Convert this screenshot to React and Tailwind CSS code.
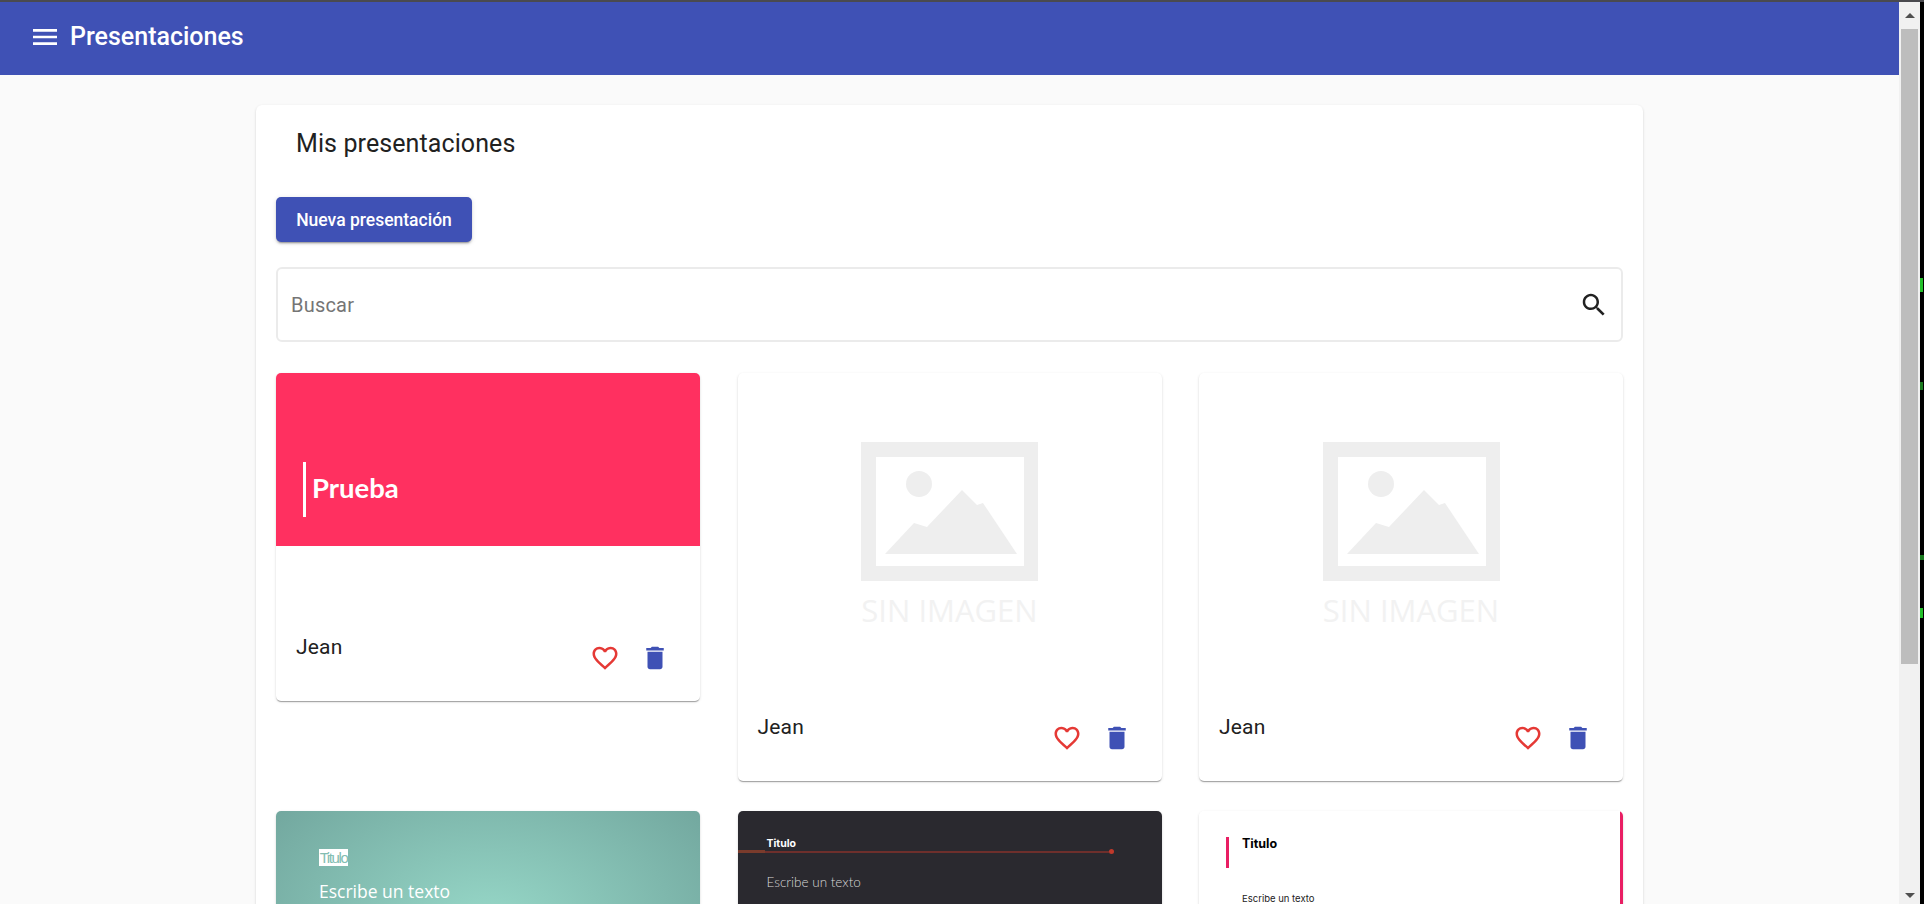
const ICONS = {
  menu: "M3 18h18v-2H3v2zm0-5h18v-2H3v2zm0-7v2h18V6H3z",
  search: "M15.5 14h-.79l-.28-.27C15.41 12.59 16 11.11 16 9.5 16 5.91 13.09 3 9.5 3S3 5.91 3 9.5 5.91 16 9.5 16c1.61 0 3.09-.59 4.23-1.57l.27.28v.79l5 4.99L20.49 19l-4.99-5zm-6 0C7.01 14 5 11.99 5 9.5S7.01 5 9.5 5 14 7.01 14 9.5 11.99 14 9.5 14z",
  heart: "M16.5 3c-1.74 0-3.41.81-4.5 2.09C10.91 3.81 9.24 3 7.5 3 4.42 3 2 5.42 2 8.5c0 3.78 3.4 6.86 8.55 11.54L12 21.35l1.45-1.32C18.6 15.36 22 12.28 22 8.5 22 5.42 19.58 3 16.5 3zm-4.4 15.55l-.1.1-.1-.1C7.14 14.24 4 11.39 4 8.5 4 6.5 5.5 5 7.5 5c1.54 0 3.04.99 3.57 2.36h1.87C13.46 5.99 14.96 5 16.5 5c2 0 3.5 1.5 3.5 3.5 0 2.89-3.14 5.74-7.9 10.05z",
  trash: "M6 19c0 1.1.9 2 2 2h8c1.1 0 2-.9 2-2V7H6v12zM19 4h-3.5l-1-1h-5l-1 1H5v2h14V4z",
};

function Icon({ name, className }) {
  return (
    <svg viewBox="0 0 24 24" fill="currentColor" className={className}>
      <path d={ICONS[name]} />
    </svg>
  );
}

function CardFooter() {
  return (
    <div className="flex h-[155px] items-start justify-between pl-5 pr-[20px]">
      <span className="mt-[87px] text-[21px] leading-[28px] tracking-[0.2px] text-[#212121]">Jean</span>
      <div className="mt-[87px] flex">
        <button className="flex h-[50px] w-[50px] items-center justify-center text-[#e53935]">
          <Icon name="heart" className="h-[30px] w-[30px]" />
        </button>
        <button className="flex h-[50px] w-[50px] items-center justify-center text-[#3f51b5]">
          <Icon name="trash" className="h-[30px] w-[30px]" />
        </button>
      </div>
    </div>
  );
}

function NoImage() {
  return (
    <div className="flex h-[253px] flex-col items-center pt-[69px]">
      <svg viewBox="0 0 177 139" className="h-[139px] w-[177px] shrink-0">
        <path
          fill="#eeeeee"
          fillRule="evenodd"
          d="M0 0H177V139H0ZM15 15V124H163V15Z"
        />
        <circle cx="58" cy="42" r="13" fill="#eeeeee" />
        <path
          fill="#eeeeee"
          d="M24 112 L53 81 L66 85 L101 48 L116 63 L122 61 L156 112Z"
        />
      </svg>
      <span className="mt-[14px] font-['Open_Sans'] text-[31px] leading-[30px] text-[#f2f2f2]">SIN IMAGEN</span>
    </div>
  );
}

function Card({ children }) {
  return (
    <div className="overflow-hidden rounded-[5px] bg-white shadow-[0_2px_1px_-1px_rgba(0,0,0,0.2),0_1px_1px_0_rgba(0,0,0,0.14),0_1px_3px_0_rgba(0,0,0,0.12)]">
      {children}
    </div>
  );
}

export default function App() {
  return (
    <div className="flex h-[904px] flex-col overflow-hidden bg-black font-['Roboto',sans-serif]">
      <div className="h-[2px] shrink-0 bg-[#4a4a4f]"></div>
      <div className="flex min-h-0 flex-1">
        {/* page */}
        <div className="h-full w-[1899px] shrink-0 overflow-hidden bg-[#fafafa]">
          <header className="flex h-[73px] items-center bg-[#3f51b5] pb-[4px] pl-[29px] text-white">
            <Icon name="menu" className="h-8 w-8" />
            <h1 className="ml-[9px] text-[25px] font-medium leading-[28px]">Presentaciones</h1>
          </header>

          <main className="mx-[256px] mt-[30px] rounded-[6px] bg-white px-5 shadow-[0_2px_1px_-1px_rgba(0,0,0,0.2),0_1px_1px_0_rgba(0,0,0,0.14),0_1px_3px_0_rgba(0,0,0,0.12)]">
            <h2 className="pl-5 pt-[23px] text-[25px] leading-[32px] tracking-[0.1px] text-[#212121]">Mis presentaciones</h2>

            <button className="mt-[37px] flex h-[45px] w-[196px] items-center justify-center rounded-[5px] bg-[#3f51b5] pt-[1px] text-[17.5px] font-medium text-white shadow-[0_3px_1px_-2px_rgba(0,0,0,0.2),0_2px_2px_0_rgba(0,0,0,0.14),0_1px_5px_0_rgba(0,0,0,0.12)]">
              Nueva presentación
            </button>

            <div className="mt-[25px] flex h-[75px] items-center rounded-[6px] border-2 border-[#ebebeb] pl-[13px] pr-[12px]">
              <input
                placeholder="Buscar"
                className="min-w-0 flex-1 bg-transparent text-[20px] tracking-[0.2px] outline-none placeholder:text-[#757575]"
              />
              <Icon name="search" className="h-[30px] w-[30px] text-[#212121]" />
            </div>

            <div className="mt-[31px] grid grid-cols-[424px_424px_424px] items-start justify-between gap-y-[30px]">
              <Card>
                <div className="flex h-[173px] items-center bg-[#ff3060] pl-[27px] pt-[60px]">
                  <div className="h-[55px] w-[3px] bg-white"></div>
                  <span className="mb-[3px] ml-[6px] font-['Lato'] text-[27.5px] font-bold leading-[34px] text-white">Prueba</span>
                </div>
                <CardFooter />
              </Card>
              <Card>
                <NoImage />
                <CardFooter />
              </Card>
              <Card>
                <NoImage />
                <CardFooter />
              </Card>

              <Card>
                <div className="h-[253px] bg-[radial-gradient(ellipse_at_50%_45%,#97d8c8_0%,#6fa39b_100%)] pl-[43px] pt-[38px]">
                  <span className="block w-[29px] overflow-hidden bg-white text-center font-['Liberation_Sans'] text-[15px] leading-[17px] tracking-[-1.4px] text-[#83bdb1]">Titulo</span>
                  <p className="mt-[15px] font-['Open_Sans'] text-[17.5px] leading-[20px] text-white">Escribe un texto</p>
                </div>
              </Card>
              <Card>
                <div className="h-[253px] bg-[#2a292f]">
                  <p className="pl-[29px] pt-[25px] font-['Inter'] text-[10.5px] font-bold leading-[16px] text-white">Titulo</p>
                  <div className="mt-[-3px] flex items-center">
                    <div className="h-[3px] w-[27px] bg-[#7a3b2c]"></div>
                    <div className="h-[2px] w-[344px] bg-[#6e2f2c]"></div>
                    <div className="h-[5px] w-[5px] rounded-full bg-[#c0392b]"></div>
                  </div>
                  <p className="mt-[16px] pl-[29px] font-['Lato'] text-[13.5px] font-light leading-[24px] text-[#d8d8d8]">Escribe un texto</p>
                </div>
              </Card>
              <Card>
                <div className="flex h-[253px] justify-between bg-white pl-[27px]">
                  <div className="pt-[26px]">
                    <div className="flex">
                      <div className="h-[31px] w-[3px] bg-[#e91e63]"></div>
                      <p className="ml-[13px] font-['Inter'] text-[12.5px] font-bold leading-[14px] text-black">Titulo</p>
                    </div>
                    <p className="ml-[16px] mt-[26px] font-['Inter'] text-[9.5px] leading-[10px] text-[#222222]">Escribe un texto</p>
                  </div>
                  <div className="h-full w-[3px] bg-[#e91e63]"></div>
                </div>
              </Card>
            </div>
          </main>
        </div>

        {/* scrollbar */}
        <div className="flex w-[21px] shrink-0 flex-col bg-[#f1f1f1]">
          <div className="flex h-[27px] shrink-0 items-center justify-center">
            <div className="h-0 w-0 border-x-[5px] border-b-[5px] border-x-transparent border-b-[#505050]"></div>
          </div>
          <div className="ml-[2px] h-[635px] w-[17px] shrink-0 bg-[#bdbdbd]"></div>
          <div className="flex-1"></div>
          <div className="flex h-[17px] shrink-0 items-center justify-center">
            <div className="h-0 w-0 border-x-[5px] border-t-[5px] border-x-transparent border-t-[#505050]"></div>
          </div>
        </div>

        {/* terminal edge behind the window */}
        <div className="relative flex-1 bg-black">
          <div className="absolute left-0 top-[276px] h-[14px] w-[3px] bg-[#22c02a]"></div>
          <div className="absolute left-0 top-[380px] h-[8px] w-[3px] bg-[#1a7a1f]"></div>
          <div className="absolute left-0 top-[553px] h-[5px] w-[4px] bg-[#1a7a1f]"></div>
          <div className="absolute left-0 top-[606px] h-[10px] w-[3px] bg-[#22c02a]"></div>
        </div>
      </div>
    </div>
  );
}
